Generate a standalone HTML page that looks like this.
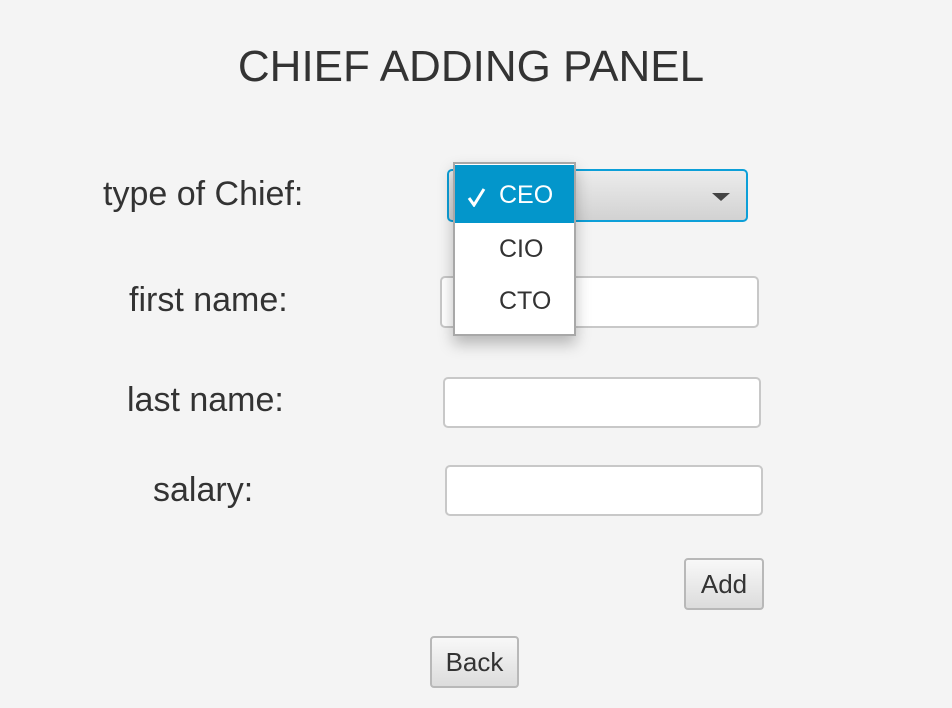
<!DOCTYPE html>
<html><head><style>
body{margin:0;width:952px;height:708px;background:#f4f4f4;font-family:"Liberation Sans",sans-serif;color:#333;position:relative;overflow:hidden}
.a{position:absolute}
.lbl{font-size:34px;letter-spacing:0;color:#333}
.tf{position:absolute;background:#fff;border:2px solid #c8c8c8;border-radius:5px;box-sizing:border-box}
.btn{position:absolute;box-sizing:border-box;border:2px solid #b8b8b8;border-radius:4px;background:linear-gradient(#f8f8f8,#dcdcdc);font-size:26px;text-align:center;color:#333}
</style></head><body>
<div class="a" style="left:0;width:942px;top:42px;text-align:center;font-size:44px;color:#333">CHIEF ADDING PANEL</div>
<div class="a lbl" style="left:103px;top:175px">type of Chief:</div>
<div class="a lbl" style="left:129px;top:281px">first name:</div>
<div class="a lbl" style="left:127px;top:381px">last name:</div>
<div class="a lbl" style="left:153px;top:471px">salary:</div>

<div class="a" style="left:447px;top:169px;width:301px;height:53px;box-sizing:border-box;border:2px solid #0c9fd8;border-radius:5px;background:linear-gradient(#ececec,#d2d2d2)"></div>
<div class="a" style="left:712px;top:193px;width:0;height:0;border-left:9px solid transparent;border-right:9px solid transparent;border-top:8px solid #444"></div>

<div class="tf" style="left:440px;top:276px;width:319px;height:52px"></div>
<div class="tf" style="left:443px;top:377px;width:318px;height:51px"></div>
<div class="tf" style="left:445px;top:465px;width:318px;height:51px"></div>

<div class="a" style="left:453px;top:162px;width:123px;height:174px;box-sizing:border-box;border:2px solid #a8a8a8;background:#fff;box-shadow:0 8px 14px rgba(0,0,0,0.25)">
<div style="height:58px;margin-top:1px;background:#0396cb;color:#fff;font-size:25px;line-height:60px;padding-left:12px;position:relative"><svg style="position:absolute;left:12px;top:22px" width="20" height="20" viewBox="0 0 20 20"><path d="M2 11 L7 18 L17 2" fill="none" stroke="#fff" stroke-width="3"/></svg><span style="margin-left:32px">CEO</span></div>
<div style="height:52px;line-height:52px;font-size:25px;padding-left:44px;color:#333">CIO</div>
<div style="height:52px;line-height:52px;font-size:25px;padding-left:44px;color:#333">CTO</div>
</div>

<div class="btn" style="left:684px;top:558px;width:80px;height:52px;line-height:48px">Add</div>
<div class="btn" style="left:430px;top:636px;width:89px;height:52px;line-height:48px">Back</div>
</body></html>
